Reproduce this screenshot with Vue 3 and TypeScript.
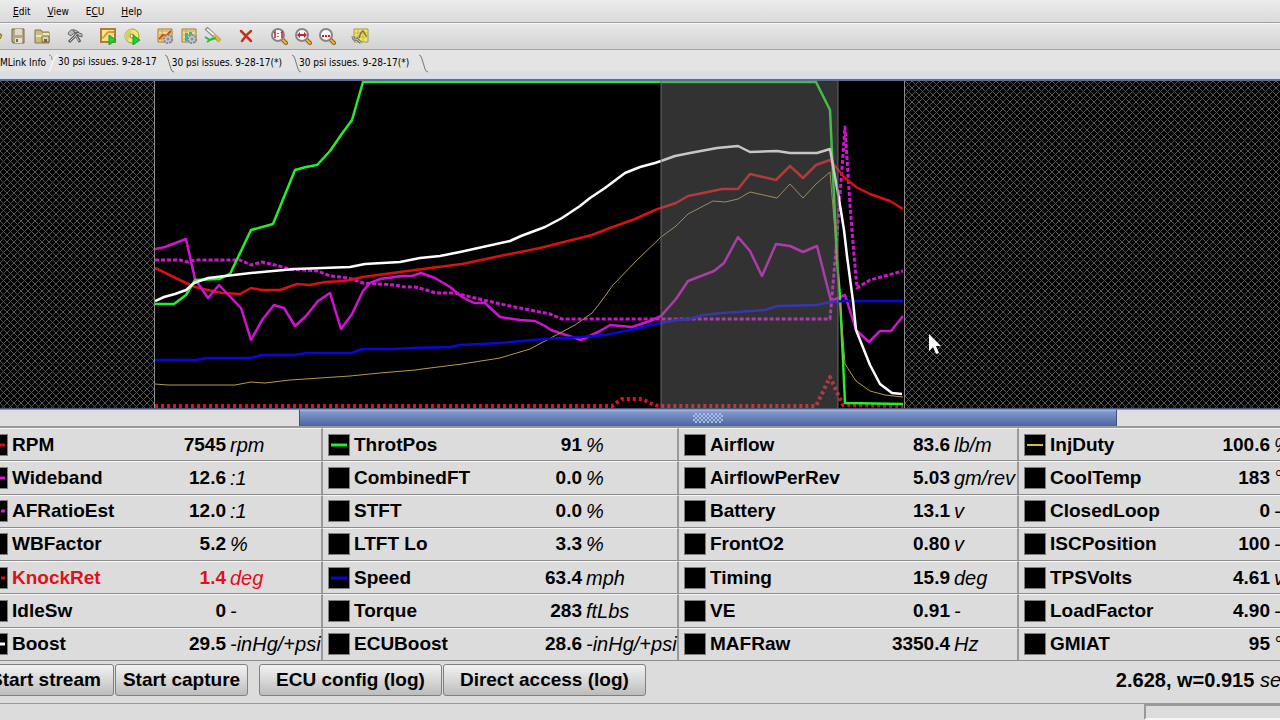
<script setup lang="ts">
interface Gauge {
  name: string
  value: string
  unit: string
  color?: string
  dashed?: boolean
  thin?: boolean
  alert?: boolean
}

interface Trace {
  id: string
  color: string
  width: number
  dash?: string
  points: string
}

interface Tab {
  label: string
  active: boolean
}

const menus = [
  { before: '', key: 'E', after: 'dit' },
  { before: '', key: 'V', after: 'iew' },
  { before: 'E', key: 'C', after: 'U' },
  { before: '', key: 'H', after: 'elp' },
]

const toolGroups: string[][] = [
  ['open', 'save', 'folder'],
  ['wrench'],
  ['graph-play', 'disc-play'],
  ['graph-gear', 'map-gear', 'pencil'],
  ['delete'],
  ['zoom-one', 'zoom-fit', 'zoom-range'],
  ['graph-tool'],
]

const tabs: Tab[] = [
  { label: 'MLink Info', active: false },
  { label: '30 psi issues. 9-28-17', active: true },
  { label: '30 psi issues. 9-28-17(*)', active: false },
  { label: '30 psi issues. 9-28-17(*)', active: false },
]

const traces: Trace[] = [
  { id: 'knock', color: '#dc1020', width: 4, dash: '3 3', points: '155,406 612,406 622,399 642,399 650,403 658,406 816,406 830,377 843,405 903,406' },
  { id: 'afr', color: '#d212d2', width: 3, dash: '4 2', points: '155,260 180,260 187,262 195,260 240,260 251,265 262,262 275,265 290,269 318,271 330,276 341,277 352,279 363,283 395,285 405,287 415,287 430,291 435,293 455,293 475,298 500,304 530,310 550,314 562,319 830,319 836,250 840,195 845,127 850,205 854,255 857,288 870,280 903,271' },
  { id: 'rpm', color: '#dc0f12', width: 2.5, points: '155,268 186,283 195,287 208,290 222,293 240,294 251,288 262,290 280,290 297,284 310,285 325,282 345,281 363,277 400,272 430,268 462,264 500,256 540,248 592,235 610,228 635,219 655,210 676,203 688,196 703,193 722,189 738,189 750,174 776,180 790,166 803,178 816,165 830,160 845,178 856,187 870,194 890,201 903,209' },
  { id: 'wideband', color: '#d212d2', width: 2.5, points: '155,249 165,247 186,239 195,279 208,298 219,285 241,308 251,340 262,320 274,305 284,308 295,326 306,316 318,301 330,293 341,329 352,314 363,291 370,283 380,279 402,276 412,276 421,273 435,278 450,287 462,297 474,303 485,303 500,317 520,320 535,321 545,326 551,330 581,340 600,331 610,325 632,327 650,321 661,316 676,299 688,281 714,271 724,263 738,237 750,251 762,276 776,244 790,246 803,252 817,246 831,301 845,295 856,330 869,342 880,331 891,331 903,316' },
  { id: 'throttle', color: '#22ee2a', width: 2.5, points: '155,304 174,304 186,295 195,280 219,279 230,274 251,230 273,224 295,170 306,167 317,165 330,151 341,135 352,120 363,82 816,82 830,110 837,260 840,297 845,403 903,404' },
  { id: 'injduty', color: '#b59c48', width: 1, points: '155,384 168,385 235,385 251,382 265,383 290,380 350,376 380,373 415,370 430,368 462,364 500,358 530,349 545,341 575,325 592,313 600,303 613,285 637,260 661,237 676,226 688,214 713,201 725,202 738,199 750,192 777,198 790,184 803,198 816,184 830,172 834,220 840,300 845,364 856,381 870,391 885,395 903,397' },
  { id: 'speed', color: '#0808d8', width: 2.5, points: '155,360 196,360 207,358 251,358 262,355 295,355 306,353 352,353 362,349 395,349 410,348 450,347 460,345 500,343 545,339 580,337 605,335 630,330 661,323 676,320 690,319 703,315 722,313 738,312 765,310 777,306 817,305 830,302 845,301 903,301' },
  { id: 'boost', color: '#ffffff', width: 2.5, points: '155,301 164,297 175,294 186,290 194,283 208,278 225,276 251,273 295,269 350,267 365,264 400,262 420,258 440,256 460,252 510,241 521,236 545,227 562,218 580,206 590,198 605,188 625,173 640,167 655,163 661,161 675,156 690,153 717,148 738,146 750,152 777,151 790,153 817,153 830,149 839,199 844,230 847,256 853,301 856,330 870,365 880,384 892,393 902,394' },
]

const rows: Gauge[][] = [
  [
    { name: 'RPM', value: '7545', unit: 'rpm', color: '#dc0f12' },
    { name: 'ThrotPos', value: '91', unit: '%', color: '#22ee2a' },
    { name: 'Airflow', value: '83.6', unit: 'lb/m' },
    { name: 'InjDuty', value: '100.6', unit: '%', color: '#d8bc3c', thin: true },
  ],
  [
    { name: 'Wideband', value: '12.6', unit: ':1', color: '#d815d8' },
    { name: 'CombinedFT', value: '0.0', unit: '%' },
    { name: 'AirflowPerRev', value: '5.03', unit: 'gm/rev' },
    { name: 'CoolTemp', value: '183', unit: '°F' },
  ],
  [
    { name: 'AFRatioEst', value: '12.0', unit: ':1', color: '#d815d8', dashed: true },
    { name: 'STFT', value: '0.0', unit: '%' },
    { name: 'Battery', value: '13.1', unit: 'v' },
    { name: 'ClosedLoop', value: '0', unit: '-' },
  ],
  [
    { name: 'WBFactor', value: '5.2', unit: '%' },
    { name: 'LTFT Lo', value: '3.3', unit: '%' },
    { name: 'FrontO2', value: '0.80', unit: 'v' },
    { name: 'ISCPosition', value: '100', unit: '-' },
  ],
  [
    { name: 'KnockRet', value: '1.4', unit: 'deg', color: '#dc0f12', dashed: true, alert: true },
    { name: 'Speed', value: '63.4', unit: 'mph', color: '#0808d0' },
    { name: 'Timing', value: '15.9', unit: 'deg' },
    { name: 'TPSVolts', value: '4.61', unit: 'v' },
  ],
  [
    { name: 'IdleSw', value: '0', unit: '-' },
    { name: 'Torque', value: '283', unit: 'ftLbs' },
    { name: 'VE', value: '0.91', unit: '-' },
    { name: 'LoadFactor', value: '4.90', unit: '-' },
  ],
  [
    { name: 'Boost', value: '29.5', unit: '-inHg/+psi', color: '#ffffff' },
    { name: 'ECUBoost', value: '28.6', unit: '-inHg/+psi' },
    { name: 'MAFRaw', value: '3350.4', unit: 'Hz' },
    { name: 'GMIAT', value: '95', unit: '°F' },
  ],
]
</script>

<template>
  <div class="window">
    <nav class="menubar">
      <button v-for="m in menus" :key="m.key" type="button">{{ m.before }}<u>{{ m.key }}</u>{{ m.after }}</button>
    </nav>

    <div class="toolbar">
      <div v-for="(group, gi) in toolGroups" :key="gi" class="group">
        <button v-for="tool in group" :key="tool" type="button" :aria-label="tool">
          <svg viewBox="0 0 18 18" width="18" height="18">
            <g v-if="tool === 'open'">
              <path d="M1 5h6l1 2h8v3l-3 5H1z" fill="#d8c46a" stroke="#7a6524" />
              <path d="M4 15l4-7h9l-4 7z" fill="#f4e36b" stroke="#8a7420" />
            </g>
            <g v-else-if="tool === 'save'">
              <path d="M3 2h12v14H4l-1-1z" fill="#b5a882" stroke="#75694b" />
              <path d="M6 2h7v6H6z" fill="#ded9c8" />
              <path d="M6 11h7v5H6z" fill="#e6e1cf" />
              <path d="M7 12h2v3H7z" fill="#75694b" />
            </g>
            <g v-else-if="tool === 'folder'">
              <path d="M2 3h6l1 2h7v11H2z" fill="#cdbb7c" stroke="#85744a" />
              <path d="M3 8h7v-2h6v4H3z" fill="#f1e9b3" />
              <path d="M9 9h7v6H9z" fill="#d8d2bd" stroke="#7b6a38" />
              <path d="M11 12h3v3h-3z" fill="#75663c" />
            </g>
            <g v-else-if="tool === 'wrench'">
              <path d="M2 7c1-3 3-5 6-4 3 0 4 2 5 3l3 1v3l-3-1-2-2c-3-1-5 0-6 2z" fill="#b9b9b9" stroke="#6a6a6a" />
              <path d="M3 15l7-7M10 8l4 7" fill="none" stroke="#606060" stroke-width="3" />
              <path d="M4 14l6-6M10 9l3 5" fill="none" stroke="#d0d0d0" />
              <path d="M7 3l2 3 4-1" fill="none" stroke="#505050" />
            </g>
            <g v-else-if="tool === 'graph-play'">
              <path d="M2 2h14v13H2z" fill="#f5e785" stroke="#b07b3a" stroke-width="2" />
              <path d="M3 11c3 0 4-6 7-6h5" fill="none" stroke="#e0953e" stroke-width="2" />
              <path d="M10 8l7 5-7 5z" fill="#21cf35" stroke="#15a02a" />
            </g>
            <g v-else-if="tool === 'disc-play'">
              <circle cx="9" cy="9" r="7" fill="#eeea6c" stroke="#a8973c" />
              <path d="M9 2a7 7 0 0 0-5 12l3-4" fill="#d7cf67" />
              <circle cx="9" cy="9" r="2" fill="#fff" stroke="#8d8041" />
              <path d="M10 8l7 5-7 5z" fill="#21cf35" stroke="#15a02a" />
            </g>
            <g v-else-if="tool === 'graph-gear' || tool === 'map-gear'">
              <path d="M2 2h14v13H2z" fill="#f2df80" stroke="#a37a36" />
              <path d="M2 4h14M3 8h12M3 12h12M6 3v12" fill="none" stroke="#c3a85e" />
              <path v-if="tool === 'graph-gear'" d="M3 12l4-4 3 1 5-5" fill="none" stroke="#d44920" stroke-width="2" />
              <path v-else d="M5 6h3v8H5zM9 5h3v6H9z" fill="#27b7c4" />
              <circle cx="12" cy="12" r="4" fill="#c5c9cf" stroke="#858b94" stroke-width="2" stroke-dasharray="2 1" />
              <circle cx="12" cy="12" r="1" fill="#fff" stroke="#6b727c" />
            </g>
            <g v-else-if="tool === 'pencil'">
              <path d="M2 1l14 13" stroke="#8a8a8a" stroke-width="4" />
              <path d="M3 2l7 6" stroke="#f5f5f5" stroke-width="2" />
              <path d="M10 8l6 6" stroke="#eeb52b" stroke-width="3" />
              <path d="M1 10l5 3 6-2M3 15l6-4" fill="none" stroke="#24bd36" stroke-width="2" />
            </g>
            <g v-else-if="tool === 'delete'">
              <path d="M4 4c3 3 6 6 10 10M14 4c-4 3-7 7-9 10" fill="none" stroke="#c8301c" stroke-width="2.5" stroke-linecap="round" />
            </g>
            <g v-else-if="tool.startsWith('zoom')">
              <path d="M12 12l4 4" stroke="#8e621d" stroke-width="4" stroke-linecap="round" />
              <path d="M12 12l4 4" stroke="#f0b638" stroke-width="2" stroke-linecap="round" />
              <circle cx="8" cy="8" r="6" fill="#f7f7f9" stroke="#858585" stroke-width="2" />
              <path v-if="tool === 'zoom-one'" d="M4 6l1-1v6M11 6l1-1v6M8 6v1M8 9v1" fill="none" stroke="#c3222a" stroke-width="1.5" />
              <path v-else-if="tool === 'zoom-fit'" d="M3 8l3-3v2h4V5l3 3-3 3V9H6v2z" fill="#c8202a" />
              <path v-else d="M4 9h2M7 9h2M10 9h2" stroke="#c8202a" stroke-width="2" />
            </g>
            <g v-else>
              <path d="M3 2h14v13H3z" fill="#eee56a" stroke="#a89a44" />
              <path d="M3 6h14M3 10h14M7 2v13M12 2v13" stroke="#c2b654" />
              <path d="M8 11c2-7 4-8 5-6s1 4 3 4" fill="none" stroke="#857728" stroke-width="1.5" />
              <path d="M2 9c0 3 2 4 4 3l4 4" fill="none" stroke="#777" stroke-width="3" />
              <path d="M2 9c0 3 2 4 4 3l4 4" fill="none" stroke="#ccc" />
            </g>
          </svg>
        </button>
      </div>
    </div>

    <div class="tabs" role="tablist">
      <template v-for="(tab, i) in tabs" :key="i">
        <button type="button" role="tab" :aria-selected="tab.active" :class="{ active: tab.active, first: i === 0 }">{{ tab.label }}</button>
        <svg class="slant" :class="{ rising: i === 0 }" viewBox="0 0 12 20" width="12" height="20">
          <path v-if="i === 0" d="M3 19L8 6q1-3 4-4" fill="none" stroke="#fff" />
          <path v-if="i === 0" d="M3 2q3 0 3 5" fill="none" stroke="#888" />
          <path v-else d="M2 2q2 0 3 4l3 10q1 3 3 3" fill="none" stroke="#777" />
        </svg>
      </template>
    </div>

    <main class="scope">
      <div class="hatch left">
        <svg width="100%" height="100%">
          <defs>
            <pattern id="mesh" width="7" height="7" patternUnits="userSpaceOnUse">
              <path d="M-1 -1L8 8M8 -1L-1 8" stroke="#565656" />
            </pattern>
          </defs>
          <rect width="100%" height="100%" fill="url(#mesh)" />
        </svg>
      </div>
      <svg class="plot" viewBox="155 81 749 327" preserveAspectRatio="none">
        <rect x="155" y="81" width="749" height="327" fill="#000" />
        <polyline
          v-for="t in traces"
          :key="t.id"
          :points="t.points"
          :stroke="t.color"
          :stroke-width="t.width"
          :stroke-dasharray="t.dash"
          fill="none"
          stroke-linejoin="round"
        />
        <rect x="661" y="81" width="177" height="327" fill="#787878" fill-opacity="0.42" />
        <path d="M661 81V408M838 81V408" stroke="#686868" />
      </svg>
      <div class="hatch right">
        <svg width="100%" height="100%">
          <rect width="100%" height="100%" fill="url(#mesh)" />
        </svg>
      </div>
      <svg class="pointer" viewBox="0 0 12 20" width="12" height="20">
        <path d="M0 0v17l4-4 3 7 3-1-3-7h5z" fill="#fff" />
      </svg>
    </main>

    <div class="scrollbar" role="scrollbar" aria-orientation="horizontal" aria-valuenow="37">
      <div class="thumb">
        <span class="grip"></span>
      </div>
    </div>

    <div class="gauges">
      <table>
        <colgroup>
          <col class="name" /><col class="v1" /><col class="wide" />
          <col class="name" /><col class="v2" /><col class="wide" />
          <col class="name" /><col class="v3" /><col class="narrow" />
          <col class="name" /><col class="v4" /><col class="last" />
        </colgroup>
        <tbody>
          <tr v-for="(row, ri) in rows" :key="ri">
            <template v-for="g in row" :key="g.name">
              <th scope="row" :class="{ alert: g.alert }">
                <span class="label">
                  <svg class="swatch" viewBox="0 0 22 22" width="22" height="22">
                    <rect x="0" y="0" width="22" height="22" fill="#808080" />
                    <rect x="1" y="1" width="20" height="20" fill="#000" />
                    <path
                      v-if="g.color"
                      d="M3 11H19"
                      :stroke="g.color"
                      :stroke-width="g.thin ? 2 : 3"
                      :stroke-dasharray="g.dashed ? '4 2' : undefined"
                    />
                  </svg>
                  {{ g.name }}
                </span>
              </th>
              <td class="value" :class="{ alert: g.alert }">{{ g.value }}</td>
              <td class="unit" :class="{ alert: g.alert }">{{ g.unit }}</td>
            </template>
          </tr>
        </tbody>
      </table>
    </div>

    <footer class="actions">
      <button type="button" class="stream">Start stream</button>
      <button type="button" class="capture">Start capture</button>
      <button type="button" class="config">ECU config (log)</button>
      <button type="button">Direct access (log)</button>
      <p class="cursor-time">2.628, w=0.915 <i>sec</i></p>
    </footer>

    <div class="status">
      <div class="progress"></div>
    </div>
  </div>
</template>

<style>
body {
  background: #dcdcdc;
}
</style>

<style scoped>
.window {
  display: flex;
  flex-direction: column;
  min-height: 100vh;
  overflow: hidden;
  background: #dcdcdc;
  color: #000;
  font-family: "Liberation Sans", Arial, sans-serif;
}

button {
  margin: 0;
  padding: 0;
  border: 0;
  background: none;
  color: inherit;
  font: inherit;
  white-space: nowrap;
}

.menubar {
  display: flex;
  gap: 17px;
  height: 22px;
  padding-left: 13px;
  border-bottom: 1px solid #a0a0a0;
  background: linear-gradient(#ececec, #dadada);
  font-family: "DejaVu Sans Condensed", "DejaVu Sans", sans-serif;
  font-size: 10px;
}

.toolbar {
  display: flex;
  align-items: center;
  gap: 15px;
  height: 25px;
  margin-left: -15px;
  padding-bottom: 1px;
  box-sizing: border-box;
  min-height: 27px;
  border-top: 1px solid #f8f8f8;
  border-bottom: 1px solid #a4a4a4;
  background: linear-gradient(#e8e8e8, #d2d2d2);
}

.group {
  display: flex;
  gap: 6px;
}

.group button,
.group svg {
  display: block;
}

.tabs {
  display: flex;
  align-items: center;
  height: 29px;
  padding-bottom: 1px;
  box-sizing: border-box;
  border-bottom: 1px solid #d3dae8;
  background: linear-gradient(#e4e4e4 0, #e4e4e4 20px, #dcdee2 22px);
  font-family: "DejaVu Sans Condensed", "DejaVu Sans", sans-serif;
  font-size: 10px;
}

.tabs button {
  height: 20px;
  padding: 0 8px 3px 0;
}

.tabs button.first {
  padding-right: 0;
}

.tabs button.active {
  padding: 0 6px 5px 0;
}

.slant {
  flex: none;
  margin: 0 -3px 2px 0;
}

.slant.rising {
  margin-right: 0;
}

.scope {
  position: relative;
  display: grid;
  grid-template-columns: 155fr 749fr 376fr;
  flex: 1 1 300px;
  border-top: 2px solid #5d6c92;
  border-bottom: 1px solid #46577f;
}

.hatch {
  display: flex;
  min-width: 0;
  background: #040404;
}

.hatch.left {
  border-right: 1px solid #8a8a8a;
}

.hatch.right {
  border-left: 1px solid #8a8a8a;
}

.plot {
  display: block;
  width: 100%;
  height: 100%;
  min-height: 0;
}

.pointer {
  position: absolute;
  left: 929px;
  top: 253px;
}

.scrollbar {
  display: grid;
  grid-template-columns: 299fr 818fr 163fr;
  height: 16px;
  border-top: 1px solid #8894b0;
  border-bottom: 2px solid #999;
  background: #dedede;
}

.thumb {
  grid-column: 2;
  display: flex;
  align-items: center;
  justify-content: center;
  border-left: 1px solid #3d5084;
  border-right: 1px solid #3d5084;
  background: linear-gradient(#a4b8e2 0, #7f97cb 2px, #4c659f 100%);
}

.grip {
  width: 30px;
  height: 10px;
  background-image: conic-gradient(#a9bce6 25%, transparent 0 50%, #a9bce6 0 75%, transparent 0);
  background-size: 4px 4px;
}

.gauges {
  overflow: hidden;
}

table {
  width: calc(100% + 98px);
  height: 233px;
  margin-left: -19px;
  border-collapse: separate;
  border-spacing: 0;
  table-layout: fixed;
  font-size: 19px;
  line-height: 22px;
}

col.name { width: 165px; }
col.v1 { width: 84px; }
col.v2 { width: 98px; }
col.v3 { width: 110px; }
col.v4 { width: 90px; }
col.wide { width: 93px; }
col.narrow { width: 65px; }
col.last { width: 85px; }

th,
td {
  padding: 0;
  border-top: 1px solid #f6f6f6;
  border-bottom: 1px solid #8c8c8c;
  text-align: left;
  vertical-align: middle;
  white-space: nowrap;
}

.label {
  display: flex;
  align-items: center;
  gap: 4px;
  padding-left: 5px;
}

.swatch {
  flex: none;
}

td.value {
  padding-right: 4px;
  font-weight: bold;
  text-align: right;
}

td.unit {
  border-right: 2px solid #999;
  font-size: 20px;
  font-style: italic;
}

.alert {
  color: #e0101c;
}

.actions {
  display: flex;
  align-items: center;
  height: 43px;
  box-sizing: border-box;
  padding-bottom: 4px;
  border-bottom: 1px solid #999;
  font-size: 19px;
  font-weight: bold;
}

.actions button {
  height: 32px;
  margin-right: 1px;
  padding: 0 16px;
  border: 1px solid #808080;
  border-radius: 3px;
  background: linear-gradient(#f2f2f2, #d8d8d8 50%, #bcbcbc);
}

.actions .stream {
  margin-left: -23px;
  padding: 0 12px;
}

.actions .capture {
  margin-right: 11px;
  padding: 0 7px;
}

.cursor-time {
  margin: 0 -11px 0 auto;
  font-size: 20px;
  white-space: nowrap;
}

.cursor-time i {
  font-weight: normal;
}

.status {
  display: flex;
  justify-content: flex-end;
  height: 16px;
}

.progress {
  width: 136px;
  box-sizing: border-box;
  border: 2px solid #999;
  border-right: 0;
  border-bottom-color: #f6f6f6;
}
</style>
